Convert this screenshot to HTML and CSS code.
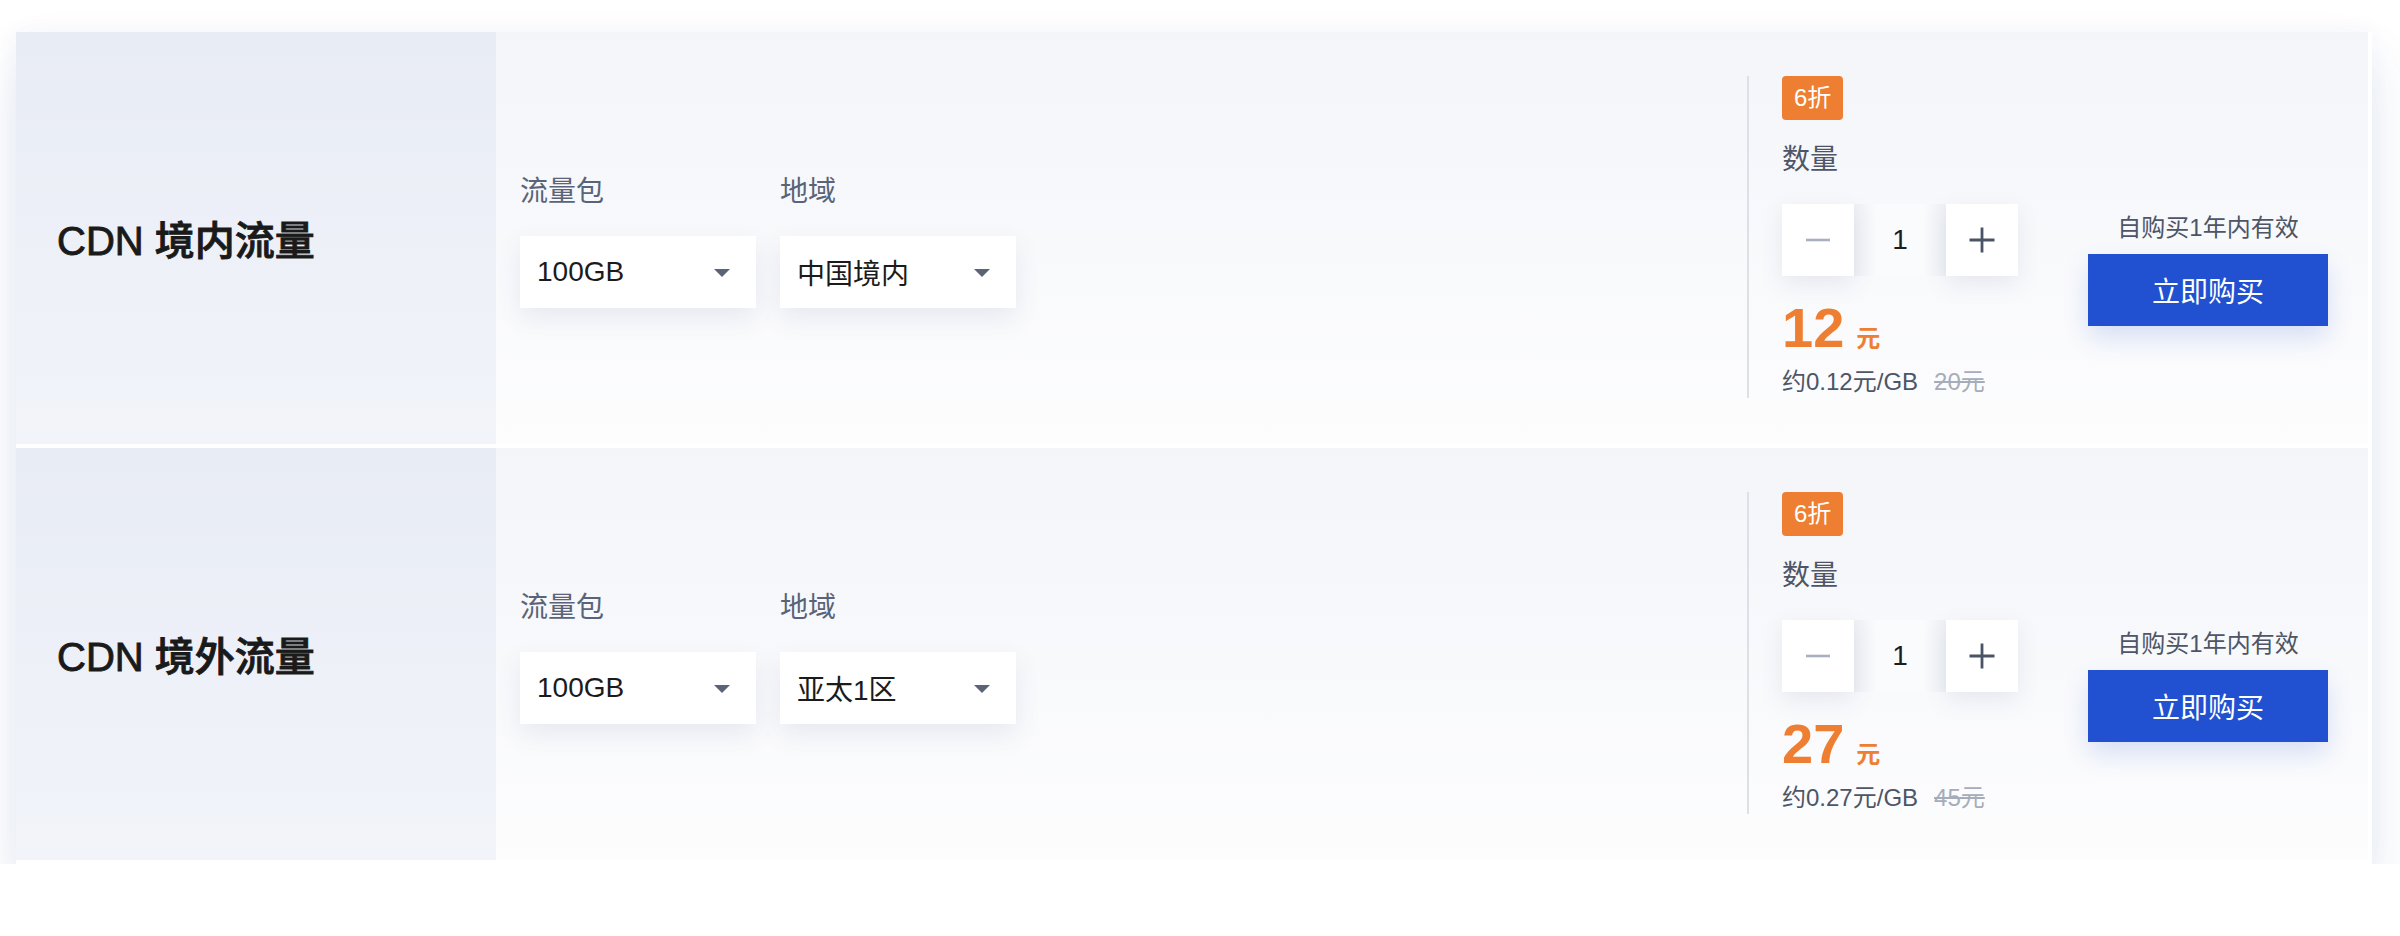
FILE: index.html
```html
<!DOCTYPE html>
<html lang="zh-CN">
<head>
<meta charset="utf-8">
<title>CDN 流量包</title>
<link rel="stylesheet" href="styles.css">
</head>
<body>
<div class="page">
  <div class="card">
    <div class="row">
      <div class="name">CDN 境内流量</div>
      <div class="options">
        <div class="field">
          <div class="label">流量包</div>
          <div class="select"><span>100GB</span><i class="caret"></i></div>
        </div>
        <div class="field">
          <div class="label">地域</div>
          <div class="select"><span>中国境内</span><i class="caret"></i></div>
        </div>
      </div>
      <div class="buy-area">
        <div class="price-block">
          <span class="badge">6折</span>
          <div class="qty-label">数量</div>
          <div class="stepper">
            <button class="step minus"><svg width="26" height="26" viewBox="0 0 26 26"><path d="M1 13H25" stroke="#a8b0be" stroke-width="2.6"/></svg></button>
            <div class="count">1</div>
            <button class="step plus"><svg width="26" height="26" viewBox="0 0 26 26"><path d="M0.5 13H25.5M13 0.5V25.5" stroke="#4b5466" stroke-width="2.8"/></svg></button>
          </div>
          <div class="price"><span class="num">12</span><span class="unit">元</span></div>
          <div class="sub">约0.12元/GB<del>20元</del></div>
        </div>
        <div class="buy-col">
          <div class="valid">自购买1年内有效</div>
          <button class="buy">立即购买</button>
        </div>
      </div>
    </div>
    <div class="row">
      <div class="name">CDN 境外流量</div>
      <div class="options">
        <div class="field">
          <div class="label">流量包</div>
          <div class="select"><span>100GB</span><i class="caret"></i></div>
        </div>
        <div class="field">
          <div class="label">地域</div>
          <div class="select"><span>亚太1区</span><i class="caret"></i></div>
        </div>
      </div>
      <div class="buy-area">
        <div class="price-block">
          <span class="badge">6折</span>
          <div class="qty-label">数量</div>
          <div class="stepper">
            <button class="step minus"><svg width="26" height="26" viewBox="0 0 26 26"><path d="M1 13H25" stroke="#a8b0be" stroke-width="2.6"/></svg></button>
            <div class="count">1</div>
            <button class="step plus"><svg width="26" height="26" viewBox="0 0 26 26"><path d="M0.5 13H25.5M13 0.5V25.5" stroke="#4b5466" stroke-width="2.8"/></svg></button>
          </div>
          <div class="price"><span class="num">27</span><span class="unit">元</span></div>
          <div class="sub">约0.27元/GB<del>45元</del></div>
        </div>
        <div class="buy-col">
          <div class="valid">自购买1年内有效</div>
          <button class="buy">立即购买</button>
        </div>
      </div>
    </div>
  </div>
</div>
</body>
</html>
```

FILE: styles.css
```css
html, body {
  margin: 0;
  background: #ffffff;
}
body {
  font-family: "Liberation Sans", "Noto Sans CJK SC", sans-serif;
}
.page {
  padding: 32px 0 0 16px;
}
.card {
  width: 2356px;
  box-sizing: border-box;
  background: #ffffff;
  padding: 0 4px 4px 0;
  display: flex;
  flex-direction: column;
  gap: 4px;
  box-shadow: 0 28px 50px rgba(45, 75, 145, 0.12), 0 0 20px rgba(45, 75, 145, 0.04);
}
.row {
  display: flex;
  height: 412px;
  background: linear-gradient(180deg, #f3f5f9 0%, #fdfdfe 100%);
}
.name {
  width: 480px;
  flex: none;
  box-sizing: border-box;
  padding-left: 41px;
  display: flex;
  align-items: center;
  background: linear-gradient(180deg, #e8ecf5 0%, #f2f4fa 100%);
  font-size: 40px;
  font-weight: 500;
  color: #1a1a1a;
  -webkit-text-stroke: 0.9px #1a1a1a;
}
.options {
  flex: 1;
  display: flex;
  align-items: center;
  gap: 24px;
  padding: 4px 0 0 24px;
}
.label {
  font-size: 28px;
  line-height: 40px;
  color: #5a6478;
  margin-bottom: 24px;
}
.select {
  width: 236px;
  height: 72px;
  box-sizing: border-box;
  background: #ffffff;
  padding: 0 26px 0 17px;
  display: flex;
  align-items: center;
  justify-content: space-between;
  font-size: 28px;
  color: #1b1b1b;
  box-shadow: 0 10px 26px rgba(60, 80, 130, 0.1);
}
.caret {
  width: 0;
  height: 0;
  border-left: 8px solid transparent;
  border-right: 8px solid transparent;
  border-top: 8px solid #5b6477;
  margin-top: 2px;
}
.buy-area {
  width: 621px;
  flex: none;
  box-sizing: border-box;
  display: flex;
  align-items: flex-start;
  padding-top: 44px;
}
.price-block {
  width: 341px;
  height: 322px;
  flex: none;
  box-sizing: border-box;
  border-left: 2px solid #dde0e6;
  padding-left: 33px;
}
.badge {
  display: inline-block;
  height: 44px;
  line-height: 44px;
  padding: 0 12px;
  background: #ee7e32;
  color: #ffffff;
  font-size: 24px;
  border-radius: 4px;
  vertical-align: top;
}
.qty-label {
  margin-top: 20px;
  font-size: 28px;
  line-height: 40px;
  color: #4d5566;
}
.stepper {
  margin-top: 24px;
  display: flex;
  width: 236px;
  height: 72px;
}
.step {
  width: 72px;
  height: 72px;
  flex: none;
  padding: 0;
  border: none;
  background: #ffffff;
  display: flex;
  align-items: center;
  justify-content: center;
  box-shadow: 0 8px 22px rgba(60, 80, 130, 0.1);
  position: relative;
}
.count {
  flex: 1;
  display: flex;
  align-items: center;
  justify-content: center;
  font-size: 28px;
  color: #1d1d1d;
  background: linear-gradient(90deg, #eef0f5 0%, #fafbfc 25%, #fafbfc 75%, #eef0f5 100%);
}
.price {
  margin-top: 24px;
  line-height: 56px;
  height: 56px;
  color: #ee7e32;
  font-weight: bold;
}
.num {
  font-size: 56px;
}
.unit {
  font-size: 24px;
  margin-left: 12px;
}
.sub {
  margin-top: 10px;
  font-size: 24px;
  line-height: 32px;
  color: #4d5566;
}
.sub del {
  margin-left: 16px;
  color: #a6adba;
}
.buy-col {
  width: 240px;
  flex: none;
  margin: 136px 40px 0 auto;
  display: flex;
  flex-direction: column;
  align-items: center;
}
.valid {
  font-size: 24px;
  line-height: 32px;
  color: #4d5566;
  white-space: nowrap;
}
.buy {
  margin-top: 10px;
  width: 240px;
  height: 72px;
  border: none;
  background: #2151d0;
  color: #ffffff;
  font-family: inherit;
  font-size: 28px;
  box-shadow: 0 12px 26px rgba(33, 81, 208, 0.16);
}
```
